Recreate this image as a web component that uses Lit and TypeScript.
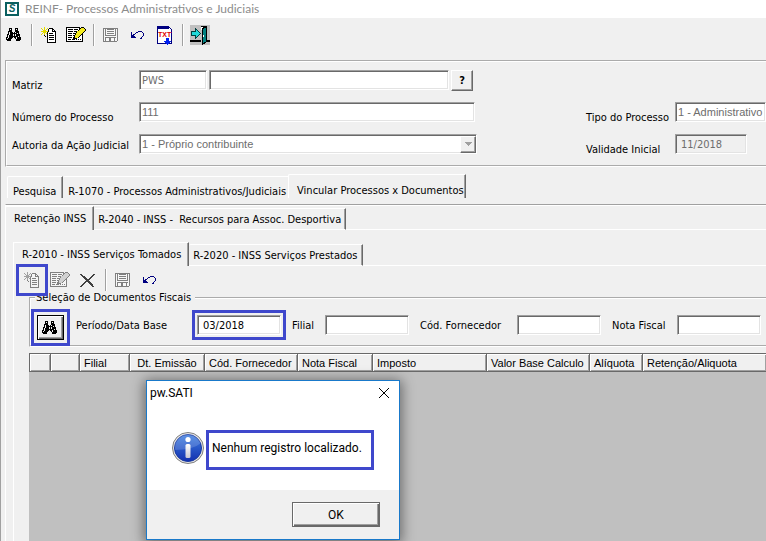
import { LitElement, html, css, svg } from "lit";
import { customElement, property } from "lit/decorators.js";

type IconName = "find" | "add" | "edit" | "delete" | "save" | "undo" | "txt" | "exit";

/** Turns rows of characters into one-pixel squares; "." stays empty. */
const pixels = (rows: string[], colors: Record<string, string>, dx = 0, dy = 0) =>
  Object.keys(colors).map((key) => {
    let d = "";
    rows.forEach((row, y) => {
      [...row].forEach((c, x) => {
        if (c === key) d += `M${x + dx} ${y + dy}h1v1h-1z`;
      });
    });
    return svg`<path d=${d} fill=${colors[key]}></path>`;
  });

const FIND = [
  "...###...###...",
  "...#.#...#.#...",
  "...###...###...",
  "..####...####..",
  "..#.###.#.###..",
  "..#.#######.#..",
  ".##.###.#.####.",
  ".#.####.#.####.",
  ".#.#########.#.",
  "##.####.##.####",
  "#.####...#.####",
  "#####.....#####",
  ".####.....####.",
];

const ADD = [
  "...y............",
  "y..y..y.####....",
  ".y.y.y.#www##...",
  "..yyy..#www#w#..",
  "yyyyyyy#www####.",
  "..yyy.#wwwwwww#.",
  ".y.y.y#w####ww#.",
  "y..y..#wwwwwww#.",
  "...#..#w#####w#.",
  "....#.#wwwwwww#.",
  "......#w#####w#.",
  "......#wwwwwww#.",
  "......#w#####w#.",
  "......#wwwwwww#.",
  "......#wwwwwww#.",
  "......#########.",
];

const EDIT = [
  "##############.###..",
  "#wwwwwwwwwwww##yyy#.",
  "#w#####w####w#yyyyy#",
  "#wwwwwwwwwww#yyyyyy#",
  "#w#####w###yyyyyyy#.",
  "#wwwwwwwww#yyyyyy#..",
  "#w####w###yyyyyy#...",
  "#wwwwwwww#yyyyy##...",
  "#w####w##yyyyy#w#...",
  "#wwwwwww#yyyy#ww#...",
  "#w####w##yyy#www#...",
  "#wwwwww####wwwww#...",
  "#w###w###w#w#w#w#...",
  "#wwwwwwwwwwwwwww#...",
  "#################...",
];

const SAVE = [
  "###############",
  "#w#w#######w#w#",
  "#w#wwwwwwwww#w#",
  "#w#w#######w#w#",
  "#w#wwwwwwwww#w#",
  "#w#w#######w#w#",
  "#w#wwwwwwwww#w#",
  "#w###########w#",
  "#wwwwwwwwwwwww#",
  "#w###########w#",
  "#w#www##www#ww#",
  "#w#www##www#ww#",
  "#w#www##www#ww#",
  "##############.",
];

const UNDO = [
  ".......####..",
  "#....##....#.",
  "#...#.......#",
  "#.##........#",
  "###.........#",
  "####.......#.",
  "#####.....#..",
  ".........##..",
];

const DELETE = [
  "##...........##",
  ".##.........##.",
  "..###......##..",
  "...###....##...",
  "....###..##....",
  ".....#####.....",
  "......###......",
  ".....#####.....",
  "....##..###....",
  "...##....###...",
  "..##......###..",
  ".##........##..",
  "##..........##.",
];

@customElement("app-icon")
export class AppIcon extends LitElement {
  @property() name: IconName = "find";
  @property({ type: Boolean }) dim = false;

  static styles = css`
    :host { display: block; }
    svg { display: block; }
    .label { font: bold 7px "Liberation Sans", sans-serif; fill: #e00000; }
  `;

  private art() {
    const line = this.dim ? "#808080" : "#000";
    const page = this.dim ? "#f4f4f4" : "#fff";
    const glow = this.dim ? "#a0a0a0" : "#e4dc00";
    switch (this.name) {
      case "find": return pixels(FIND, { "#": "#000" }, 2, 3);
      case "add": return pixels(ADD, { "#": line, w: page, y: glow }, 2, 2);
      case "edit": return pixels(EDIT, { "#": line, w: page, y: this.dim ? "#d0d0d0" : "#f4ec20" }, 0, 2);
      case "save": return pixels(SAVE, { "#": "#808080", w: "#f8f8f8" }, 2, 3);
      case "undo": return pixels(UNDO, { "#": "#000080" }, 3, 6);
      case "delete": return pixels(DELETE, { "#": "#404040" }, 2, 4);
      case "txt":
        return svg`
          <path d="M2.5 1.5h11l3 3v14h-14z" fill="#fff" stroke="#000080"></path>
          <path d="M2 1h12v3h-12z" fill="#000080"></path>
          <text class="label" x="3" y="12" shape-rendering="auto">TXT</text>
          <path d="M11 13h3v3h2l-3 4h-1l-3-4h2z" fill="#0020f0"></path>`;
      case "exit":
        return svg`
          <path d="M0 0h20v20h-20z" fill="#c0c0c0"></path>
          <path d="M0 15h11v2h-11zM17 15h3v2h-3z" fill="#000"></path>
          <path d="M10.500 1.500h6v15h-2" fill="#fff" stroke="#000"></path>
          <path d="M12.500 3.500l4-2v15l-4 3z" fill="#008080" stroke="#000"></path>
          <path d="M13 10h1v2h-1z" fill="#fff"></path>
          <path d="M1.500 6.500h4v-3l5 5-5 5v-3h-4z" fill="#20d8d8" stroke="#004040"></path>`;
    }
  }

  render() {
    return html`<svg width="20" height="20" viewBox="0 0 20 20" shape-rendering="crispEdges" aria-hidden="true">${this.art()}</svg>`;
  }
}

interface Tab { label: string; active?: boolean; }

@customElement("tab-strip")
export class TabStrip extends LitElement {
  @property({ attribute: false }) tabs: Tab[] = [];
  @property({ type: Boolean }) open = false;

  static styles = css`
    :host { display: block; }
    .strip { display: flex; align-items: flex-end; height: 24px; }
    .strip::after { content: ""; flex: 1; border-bottom: 1px solid #fff; }
    .tab {
      box-sizing: border-box;
      height: 22px;
      padding: 2px 4px 0 4px;
      border: 0 solid #fff;
      border-width: 1px 1px 1px 0;
      border-right-color: #696969;
      box-shadow: inset -1px 0 #a0a0a0;
      border-radius: 2px 0 0 0;
      background: #f0f0f0;
      color: #000;
      font: 11px/14px var(--ui);
      white-space: pre;
    }
    .active { height: 24px; padding: 1px 7px 1px 8px; border-width: 1px 1px 0 1px; }
    .open .tab { border-bottom: 0; padding-top: 8px; }
    .open .active { padding: 9px 1px 0 8px; }
    .open .before { border-right: 0; box-shadow: none; padding: 8px 2px 0 5px; }
    .open .tab:first-child { border-left: 1px solid #fff; padding: 8px 6px 0 5px; }
    .open::after { border: 0; }
  `;

  render() {
    return html`<div class="strip ${this.open ? "open" : ""}" role="tablist">
      ${this.tabs.map((t, i) => html`<button
        class="tab ${t.active ? "active" : ""} ${this.tabs[i + 1]?.active ? "before" : ""}"
        role="tab" aria-selected=${t.active ? "true" : "false"}>${t.label}</button>`)}
    </div>`;
  }
}

@customElement("app-root")
export class AppRoot extends LitElement {
  static styles = css`
    :host {
      --ui: "DejaVu Sans Condensed", "Noto Sans", sans-serif;
      --grid: "Liberation Sans", sans-serif;
      --title: Lato, "Noto Sans", sans-serif;
      --message: Roboto, "Noto Sans", sans-serif;
      --mark: #3f48cc;
      position: relative;
      display: flex;
      flex-direction: column;
      box-sizing: border-box;
      min-height: 100vh;
      overflow: hidden;
      border-left: 1px solid #a0a0a0;
      background: #f0f0f0;
      color: #000;
      font: 11px/14px var(--ui);
    }
    button, input, select { box-sizing: border-box; margin: 0; font: inherit; color: inherit; }
    label { white-space: nowrap; }

    .titlebar {
      display: flex; align-items: center; gap: 6px; height: 18px; padding-left: 4px;
      background: #fff; color: #8c8c8c; font: 12px/18px var(--title);
    }
    .title { margin: 0; font: inherit; }
    .logo {
      box-sizing: border-box; width: 14px; height: 14px; border: 2px solid #0a6060;
      background: #fff; color: #0a6060; text-align: center;
      font: italic bold 10px/10px var(--grid);
    }

    .toolbar { display: flex; align-items: center; height: 34px; padding-left: 1px; }
    .tool { flex: none; width: 24px; height: 24px; padding: 2px; border: 0; background: none; }
    .sep { width: 1px; height: 22px; margin: 0 5px; background: #a0a0a0; box-shadow: 1px 0 #fff; }
    .wide { margin-right: 3px; }
    .apart { margin-right: 4px; }
    .mark { position: relative; z-index: 1; outline: 3px solid var(--mark); outline-offset: 1px; }

    .frame {
      display: grid;
      grid-template-columns: 127px 338px 1fr 89px 91px;
      grid-auto-rows: 20px;
      row-gap: 12px;
      align-items: start;
      margin: 8px 0 0 4px;
      padding: 8px 0 11px 5px;
      border: 2px groove #fff;
      border-right: 0;
    }
    .frame label { grid-column: 1; padding-top: 5px; }
    .frame .low { padding-top: 9px; }
    .frame .right { grid-column: 4; }
    .pair { display: flex; gap: 2px; }
    .field {
      width: 100%; height: 20px; padding: 0 0 0 2px; border: 1px solid;
      border-color: #a0a0a0 #fff #fff #a0a0a0; border-radius: 0;
      box-shadow: inset 1px 1px #696969, inset -1px -1px #e3e3e3;
      background: #fff; outline: 0;
    }
    .field:disabled { color: #6d6d6d; opacity: 1; }
    .thin { font-family: var(--grid); }
    .code { width: 68px; }
    .name { width: 240px; }
    .date { width: 72px; padding-left: 5px; }
    .date:disabled { background: #f0f0f0; }
    .full { width: 336px; }
    .raised {
      border: 1px solid; border-color: #fff #696969 #696969 #fff; border-radius: 0;
      background: #f0f0f0; box-shadow: inset -1px -1px #a0a0a0;
    }
    .help { width: 22px; height: 21px; padding: 0; font-weight: bold; }
    .combo { display: grid; }
    .combo > * { grid-area: 1 / 1; }
    .select { appearance: none; }
    .arrow {
      display: grid; place-items: center; justify-self: end; align-self: center;
      box-sizing: border-box; width: 16px; height: 17px; margin-right: 1px; pointer-events: none;
    }

    .tabs1 { margin: 7px 0 6px 6px; }
    .panel1 {
      display: flex; flex-direction: column; flex: 1; margin-left: 4px;
      border-top: 1px solid #a0a0a0; border-left: 1px solid #fff;
      box-shadow: inset 0 1px #fff;
    }
    .tabs2 { margin: 1px 0 12px; }
    .tabs2, .tabs3 { margin-left: -1px; }
    .panel2 {
      display: flex; flex-direction: column; flex: 1; margin-left: 7px;
      border-left: 1px solid #fff;
    }
    .tools2 { display: flex; align-items: center; padding: 4px 0 1px 6px; height: 20px; }

    .filters {
      margin: 0 0 0 15px; padding: 10px 0 5px 6px; min-width: 0;
      border: 2px groove #fff; border-right: 0;
    }
    .legend { margin-left: -2px; padding: 0 4px 0 1px; }
    .line { display: flex; align-items: flex-start; height: 25px; }
    .line label { padding-top: 4px; }
    .search {
      width: 27px; height: 25px; padding: 0 2px; border: 1px solid #000; border-radius: 0;
      background: #f0f0f0; box-shadow: inset 1px 1px #fff, inset -1px -1px #696969, inset -2px -2px #a0a0a0;
      outline-offset: 3px; flex: none;
    }
    .line .field { flex: none; width: 84px; }
    .period { flex: none; width: 121px; margin-left: 12px; }
    .l-branch { width: 33px; margin-left: 11px; }
    .l-supplier { width: 97px; margin-left: 11px; }
    .l-note { width: 65px; margin-left: 11px; }
    .line .mark.field { outline: 3px solid var(--mark); outline-offset: 2px; padding-left: 5px; }

    .sheet { flex: 1; margin: 6px 0 0 15px; background: #c0c0c0; }
    .grid {
      width: 100%; table-layout: fixed; border-spacing: 0;
      border-top: 1px solid #696969; border-left: 1px solid #696969;
      font: 11px/14px var(--grid);
    }
    .grid th {
      box-sizing: border-box;
      height: 18px; padding: 0 0 0 4px; text-align: left; font-weight: normal; white-space: nowrap;
      background: #f0f0f0; border: 0 solid #696969; border-width: 0 1px 1px 0;
      box-shadow: inset 1px 1px #fff, inset -1px -1px #a0a0a0;
    }
    .grid th.center { text-align: center; padding: 0; }
    .grid th:last-child { border-right: 0; }
    .c1 { width: 21px; } .c2 { width: 29px; } .c3 { width: 50px; } .c4 { width: 75px; }
    .c5 { width: 93px; } .c6 { width: 75px; } .c7 { width: 114px; } .c8 { width: 103px; } .c9 { width: 53px; }

    .dialog {
      position: absolute; left: 145px; top: 380px; z-index: 2;
      box-sizing: border-box; width: 254px; margin: 0; padding: 0;
      border: 1px solid #1979ca; background: #fff; color: #000;
      box-shadow: 0 2px 12px 2px rgba(0, 0, 0, 0.45);
      font: 12px/16px var(--message);
    }
    .dlg-head { display: flex; justify-content: space-between; height: 24px; padding: 0 9px 0 3px; align-items: center; }
    .close { width: 12px; height: 12px; padding: 0; border: 0; background: none; }
    .close svg, .info { display: block; }
    .dlg-body { display: flex; align-items: center; gap: 4px; height: 85px; padding-left: 24px; }
    .message {
      box-sizing: border-box; width: 162px; height: 34px; margin: 4px 0 0; padding: 7px 0 0 3px;
      outline: 3px solid var(--mark); white-space: nowrap;
    }
    .dlg-foot { display: flex; justify-content: flex-end; padding: 12px 19px; background: #f0f0f0; }
    .ok {
      width: 88px; height: 25px; padding: 0; border: 1px solid #696969; border-radius: 0; background: #f0f0f0;
      box-shadow: inset 1px 1px #fff, inset -1px -1px #696969, inset -2px -2px #a0a0a0;
    }
  `;

  private tool(name: IconName, title: string, cls = "", dim = false) {
    return html`<button class="tool ${cls}" aria-label=${title}><app-icon name=${name} ?dim=${dim}></app-icon></button>`;
  }

  private mainTabs: Tab[] = [
    { label: "Pesquisa" },
    { label: "R-1070 - Processos Administrativos/Judiciais" },
    { label: "Vincular Processos x Documentos", active: true },
  ];
  private taxTabs: Tab[] = [
    { label: "Retenção INSS", active: true },
    { label: "R-2040 - INSS -  Recursos para Assoc. Desportiva" },
  ];
  private serviceTabs: Tab[] = [
    { label: "R-2010 - INSS Serviços Tomados", active: true },
    { label: "R-2020 - INSS Serviços Prestados" },
  ];
  private columns = ["", "", "Filial", "Dt. Emissão", "Cód. Fornecedor", "Nota Fiscal", "Imposto", "Valor Base Calculo", "Alíquota", "Retenção/Aliquota"];

  render() {
    return html`
      <header class="titlebar">
        <span class="logo" aria-hidden="true">S</span>
        <h1 class="title">REINF- Processos Administrativos e Judiciais</h1>
      </header>

      <nav class="toolbar" aria-label="Principal">
        ${this.tool("find", "Localizar")}
        <span class="sep"></span>
        ${this.tool("add", "Novo", "wide")}
        ${this.tool("edit", "Editar")}
        <span class="sep"></span>
        ${this.tool("save", "Salvar", "wide", true)}
        ${this.tool("undo", "Desfazer", "wide")}
        ${this.tool("txt", "Gerar TXT")}
        <span class="sep"></span>
        ${this.tool("exit", "Sair")}
      </nav>

      <section class="frame">
        <label class="low" for="matriz">Matriz</label>
        <div class="pair">
          <input id="matriz" class="field code" value="PWS" disabled>
          <input class="field name" aria-label="Nome da matriz">
          <button class="raised help">?</button>
        </div>
        <label class="low" for="numero">Número do Processo</label>
        <input id="numero" class="field full thin" value="111" disabled>
        <label class="low right" for="tipo">Tipo do Processo</label>
        <input id="tipo" class="field thin" value="1 - Administrativo" disabled>
        <label for="autoria">Autoria da Ação Judicial</label>
        <div class="combo">
          <select id="autoria" class="field select thin" disabled><option>1 - Próprio contribuinte</option></select>
          <span class="raised arrow"><svg width="7" height="4" viewBox="0 0 7 4" shape-rendering="crispEdges"><path d="M0 0h7v1h-1v1h-1v1h-1v1h-1v-1h-1v-1h-1v-1h-1z" fill="#a0a0a0"></path></svg></span>
        </div>
        <label class="low right" for="validade">Validade Inicial</label>
        <input id="validade" class="field date" value="11/2018" disabled>
      </section>

      <tab-strip class="tabs1" open .tabs=${this.mainTabs}></tab-strip>
      <main class="panel1">
        <tab-strip class="tabs2" .tabs=${this.taxTabs}></tab-strip>
        <div class="panel2">
          <tab-strip class="tabs3" .tabs=${this.serviceTabs}></tab-strip>
          <div class="tools2">
            ${this.tool("add", "Novo documento", "mark apart", true)}
            ${this.tool("edit", "Editar documento", "apart", true)}
            ${this.tool("delete", "Excluir")}
            <span class="sep"></span>
            ${this.tool("save", "Salvar documento", "wide", true)}
            ${this.tool("undo", "Desfazer alteração")}
          </div>
          <fieldset class="filters">
            <legend class="legend">Seleção de Documentos Fiscais</legend>
            <div class="line">
              <button class="search mark" aria-label="Pesquisar"><app-icon name="find"></app-icon></button>
              <label class="period" for="periodo">Período/Data Base</label>
              <input id="periodo" class="field mark" value="03/2018">
              <label class="l-branch" for="filial">Filial</label>
              <input id="filial" class="field">
              <label class="l-supplier" for="fornecedor">Cód. Fornecedor</label>
              <input id="fornecedor" class="field">
              <label class="l-note" for="nota">Nota Fiscal</label>
              <input id="nota" class="field">
            </div>
          </fieldset>
          <div class="sheet">
            <table class="grid">
              <thead><tr>${this.columns.map((c, i) => html`<th class="c${i + 1} ${i === 3 ? "center" : ""}" scope="col">${c}</th>`)}</tr></thead>
            </table>
          </div>
        </div>
      </main>

      <dialog class="dialog" open aria-labelledby="dlg-title">
        <div class="dlg-head">
          <span id="dlg-title">pw.SATI</span>
          <button class="close" aria-label="Fechar"><svg width="12" height="12" viewBox="0 0 12 12"><path d="M1 1l10 10M11 1L1 11" stroke="#000" fill="none"></path></svg></button>
        </div>
        <div class="dlg-body">
          <svg class="info" width="34" height="34" viewBox="0 0 34 34" aria-hidden="true">
            <defs>
              <linearGradient id="blue" x1="0" y1="0" x2="0" y2="1"><stop offset="0" stop-color="#3f7fe0"></stop><stop offset="1" stop-color="#1230b0"></stop></linearGradient>
              <linearGradient id="silver" x1="0" y1="0" x2="0" y2="1"><stop offset="0" stop-color="#fff"></stop><stop offset="1" stop-color="#c8c8d4"></stop></linearGradient>
            </defs>
            <circle cx="17" cy="17" r="15.500" fill="#e4e4e4" stroke="#808080"></circle>
            <circle cx="17" cy="17" r="13.500" fill="url(#blue)" stroke="#1838a0"></circle>
            <path d="M4 19A13 13 0 0 1 30 12Q22 19 4 19z" fill="#fff" opacity="0.160"></path>
            <circle cx="17" cy="8.500" r="2.600" fill="#fff"></circle>
            <rect x="14.500" y="13" width="5" height="14" rx="1.500" fill="url(#silver)"></rect>
          </svg>
          <p class="message">Nenhum registro localizado.</p>
        </div>
        <div class="dlg-foot"><button class="ok">OK</button></div>
      </dialog>
    `;
  }
}
